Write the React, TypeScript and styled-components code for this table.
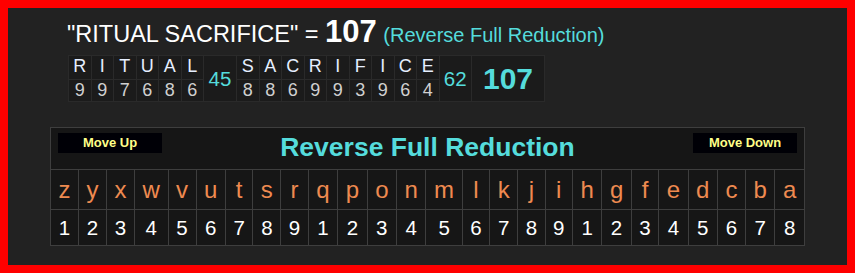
import React from "react";
import styled, { createGlobalStyle } from "styled-components";

const GlobalStyle = createGlobalStyle`
  html, body {
    margin: 0;
    padding: 0;
    background: #222;
  }
  body {
    font-family: "Liberation Sans", Arial, sans-serif;
  }
`;

const phrase = "RITUAL SACRIFICE";

// reverse full reduction: z=1 ... a=8
const reduce = (ch: string) => {
  const n = 26 - (ch.toLowerCase().charCodeAt(0) - 97);
  return ((n - 1) % 9) + 1;
};

const alphabet = "zyxwvutsrqponmlkjihgfedcba".split("");

const Frame = styled.div`
  box-sizing: border-box;
  width: 855px;
  height: 273px;
  border: 8px solid #ff0000;
  background: #222;
  padding-top: 8px;
`;

const Title = styled.div`
  height: 33px;
  margin-left: 59px;
  font-size: 23.5px;
  line-height: 31px;
  color: #fff;
  white-space: nowrap;
`;

const Total = styled.b`
  font-size: 31px;
`;

const CipherName = styled.span`
  font-size: 20px;
  color: #55dcdc;
`;

const WordGrid = styled.div`
  display: inline-grid;
  margin: 6px 0 0 60px;
  padding: 1px;
  gap: 1px;
  background: #2a2a2a;
  grid-template-columns: repeat(6, 21.5px) 32px repeat(9, 21.5px) 31.5px 72px;
  grid-template-rows: 23px 21px;
`;

const Cell = styled.div<{ $row: number }>`
  background: #1b1b1b;
  text-align: center;
  font-size: 18px;
  line-height: 20px;
  grid-row: ${({ $row }) => $row};
  color: ${({ $row }) => ($row === 1 ? "#e6efff" : "#d0d0d0")};
`;

const SumCell = styled.div<{ $big?: boolean }>`
  grid-row: 1 / span 2;
  background: #1b1b1b;
  display: flex;
  align-items: center;
  justify-content: center;
  color: #55dcdc;
  font-size: ${({ $big }) => ($big ? "30px" : "20.5px")};
  font-weight: ${({ $big }) => ($big ? 700 : 400)};
`;

const Chart = styled.table`
  margin: 25px 0 0 42px;
  width: 755px;
  border-collapse: collapse;
  background: #161616;
  border: 1px solid #3e3e3e;
`;

const HeaderCell = styled.td`
  height: 41px;
  padding: 0;
  border: 1px solid #3e3e3e;
  vertical-align: top;
`;

const HeaderBar = styled.div`
  display: flex;
  align-items: flex-start;
  padding: 5px 7px 0;
`;

const MoveButton = styled.div`
  width: 104px;
  height: 20px;
  background: #000006;
  color: #ffff88;
  font-size: 13px;
  font-weight: 700;
  line-height: 20px;
  text-align: center;
`;

const ChartTitle = styled.div`
  flex: 1;
  text-align: center;
  color: #55dcdc;
  font-size: 26.5px;
  font-weight: 700;
  line-height: 29px;
`;

const LetterCell = styled.td`
  height: 39px;
  padding: 0 7px;
  border: 1px solid #3e3e3e;
  text-align: center;
  color: #ee8a50;
  font-size: 24px;
`;

const NumberCell = styled.td`
  height: 35px;
  padding: 0 7px;
  border: 1px solid #3e3e3e;
  text-align: center;
  color: #fff;
  font-size: 20.5px;
`;

export default function App() {
  const words = phrase.split(" ");
  const sums = words.map((w) => w.split("").reduce((s, c) => s + reduce(c), 0));
  const total = sums.reduce((a, b) => a + b, 0);

  const gridItems: React.ReactNode[] = [];
  words.forEach((w, wi) => {
    w.split("").forEach((c, ci) => {
      gridItems.push(
        <Cell key={`l${wi}-${ci}`} $row={1}>
          {c}
        </Cell>,
        <Cell key={`n${wi}-${ci}`} $row={2}>
          {reduce(c)}
        </Cell>
      );
    });
    gridItems.push(<SumCell key={`s${wi}`}>{sums[wi]}</SumCell>);
  });

  return (
    <>
      <GlobalStyle />
      <Frame>
        <Title>
          "{phrase}" = <Total>{total}</Total>{" "}
          <CipherName>(Reverse Full Reduction)</CipherName>
        </Title>
        <WordGrid>
          {gridItems}
          <SumCell $big>{total}</SumCell>
        </WordGrid>
        <Chart>
          <tbody>
            <tr>
              <HeaderCell colSpan={26}>
                <HeaderBar>
                  <MoveButton>Move Up</MoveButton>
                  <ChartTitle>Reverse Full Reduction</ChartTitle>
                  <MoveButton>Move Down</MoveButton>
                </HeaderBar>
              </HeaderCell>
            </tr>
            <tr>
              {alphabet.map((c) => (
                <LetterCell key={c}>{c}</LetterCell>
              ))}
            </tr>
            <tr>
              {alphabet.map((c) => (
                <NumberCell key={c}>{reduce(c)}</NumberCell>
              ))}
            </tr>
          </tbody>
        </Chart>
      </Frame>
    </>
  );
}
